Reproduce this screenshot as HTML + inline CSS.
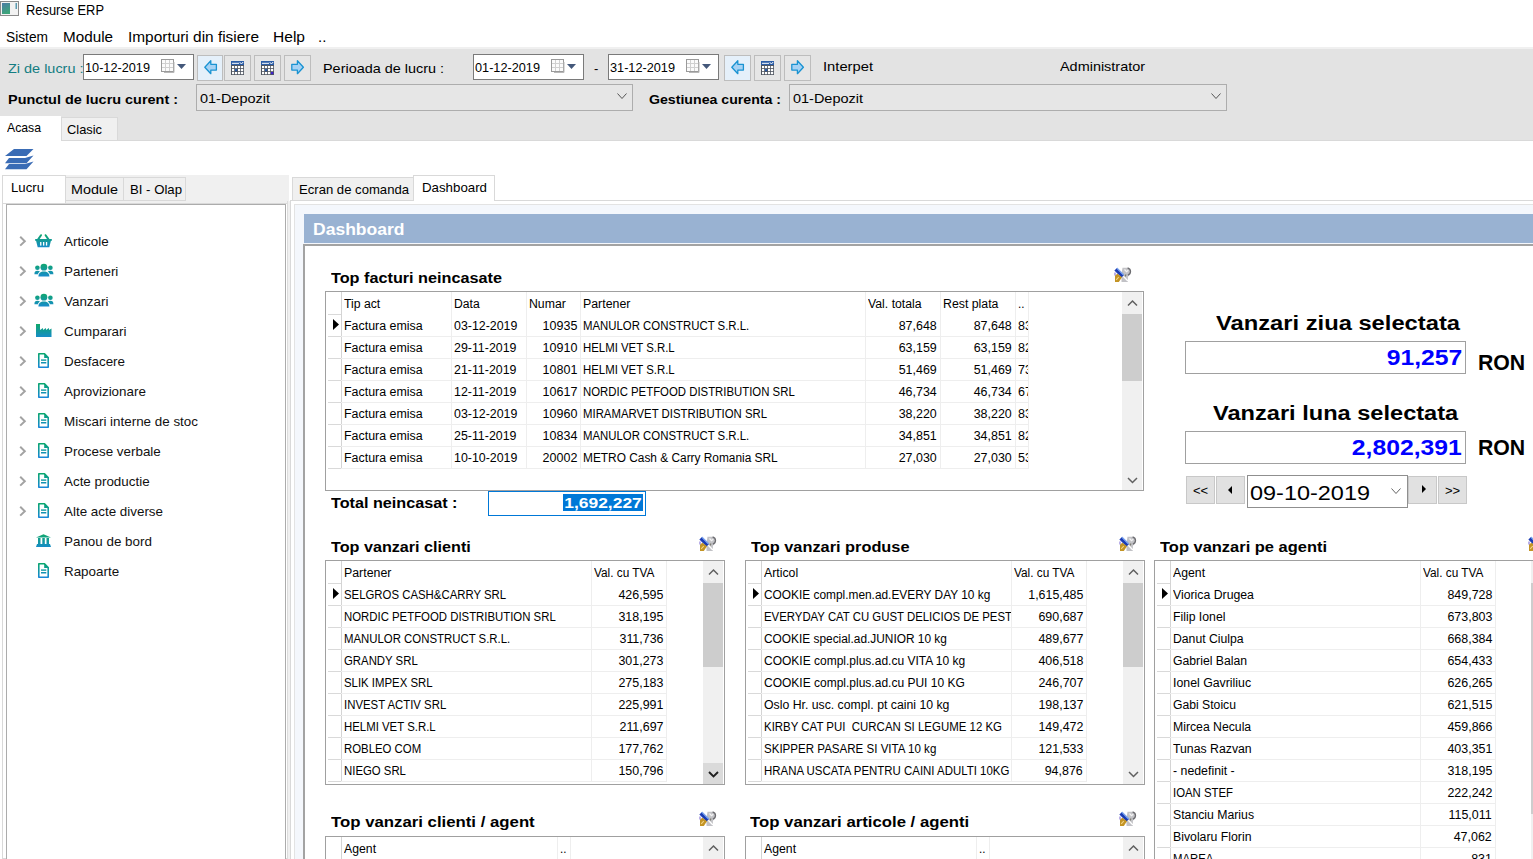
<!DOCTYPE html>
<html><head><meta charset="utf-8"><title>Resurse ERP</title>
<style>
html,body{margin:0;padding:0;width:1533px;height:859px;overflow:hidden;background:#fff;position:relative;font-family:"Liberation Sans",sans-serif;}
.a{position:absolute;}
.t{position:absolute;white-space:pre;line-height:1;}
svg{position:absolute;overflow:visible;}
</style></head><body>
<svg style="left:0;top:0" width="20" height="18"><defs><linearGradient id="ti" x1="0" y1="0" x2="0.4" y2="1"><stop offset="0" stop-color="#4c7ba6"/><stop offset="1" stop-color="#3da57a"/></linearGradient></defs><rect x="0.5" y="1.5" width="18" height="14" fill="#f2f2f2" stroke="#8a8a8a"/><rect x="2" y="3" width="8" height="11" fill="url(#ti)"/><rect x="15.5" y="3" width="1.5" height="6" fill="#5a9ab0"/></svg>
<div class="t" style="top:2.15px;font:14px 'Liberation Sans',sans-serif;color:#000;left:25.8px;transform-origin:0 0;transform:scaleX(0.9197);">Resurse ERP</div>
<div class="t" style="top:28.30px;font:15px 'Liberation Sans',sans-serif;color:#000;left:6px;transform-origin:0 0;transform:scaleX(0.9162);">Sistem</div>
<div class="t" style="top:28.30px;font:15px 'Liberation Sans',sans-serif;color:#000;left:63px;transform-origin:0 0;transform:scaleX(1.0162);">Module</div>
<div class="t" style="top:28.30px;font:15px 'Liberation Sans',sans-serif;color:#000;left:128px;transform-origin:0 0;transform:scaleX(1.0271);">Importuri din fisiere</div>
<div class="t" style="top:28.30px;font:15px 'Liberation Sans',sans-serif;color:#000;left:273px;transform-origin:0 0;transform:scaleX(1.0370);">Help</div>
<div class="t" style="top:28.30px;font:15px 'Liberation Sans',sans-serif;color:#000;left:318px;transform-origin:0 0;">..</div>
<div class="a" style="left:0px;top:47px;width:1533px;height:2px;background:#f0f0f0;"></div>
<div class="a" style="left:0px;top:49px;width:1533px;height:67px;background:#e3e3e3;"></div>
<div class="t" style="top:61.00px;font:13px 'Liberation Sans',sans-serif;color:#137d82;left:7.8px;transform-origin:0 0;transform:scaleX(1.1116);">Zi de lucru :</div>
<div class="a" style="left:83px;top:54px;width:111px;height:26px;background:#fff;box-sizing:border-box;border:1px solid #7a7a7a;"></div>
<div class="t" style="top:60.00px;font:13px 'Liberation Sans',sans-serif;color:#000;left:85.3px;transform-origin:0 0;transform:scaleX(0.9774);">10-12-2019</div>
<svg style="left:161px;top:59px" width="16" height="16"><rect x="0.5" y="0.5" width="12" height="12" fill="#fbfbfb" stroke="#9a9a9a"/><path d="M4.5 1v11M8.5 1v11M1 4.5h11M1 8.5h11" stroke="#d0d0d0"/><path d="M13 3v10.5H3" stroke="#b8b8b8" fill="none"/></svg>
<svg style="left:177px;top:64px" width="10" height="6"><path d="M0 0h9L4.5 5z" fill="#44587a"/></svg>
<div class="a" style="left:197px;top:55px;width:26px;height:26px;background:#e5f0fa;box-sizing:border-box;border:1px solid #bdbdbd;"></div>
<svg style="left:203.5px;top:59.5px" width="14" height="15"><path d="M0.8 7.2L6.8 0.8V4.3h5.6v5.8H6.8v3.6z" fill="#a6d2f4" stroke="#1a93d2" stroke-width="1.3" stroke-linejoin="round"/></svg>
<div class="a" style="left:224px;top:55px;width:27px;height:26px;background:#e6e6e6;box-sizing:border-box;border:1px solid #bdbdbd;"></div>
<svg style="left:231.0px;top:61px" width="13" height="14"><rect x="0" y="0" width="13" height="14" fill="#4f5560"/><rect x="0" y="0" width="13" height="4" fill="#2a5ca6"/><path d="M1 2.3h7" stroke="#fff" stroke-width="1"/><path d="M8.8 1.2l1.6 1.8 1.8-2" stroke="#fff" stroke-width="1" fill="none"/><rect x="1" y="5" width="2.2" height="2.2" fill="#fff"/><rect x="4" y="5" width="2.2" height="2.2" fill="#fff"/><rect x="7" y="5" width="2.2" height="2.2" fill="#fff"/><rect x="10" y="5" width="2.2" height="2.2" fill="#fff"/><rect x="1" y="8" width="2.2" height="2.2" fill="#fff"/><rect x="4" y="8" width="2.2" height="2.2" fill="#2a5aa8"/><rect x="7" y="8" width="2.2" height="2.2" fill="#fff"/><rect x="10" y="8" width="2.2" height="2.2" fill="#fff"/><rect x="1" y="11" width="2.2" height="2.2" fill="#fff"/><rect x="4" y="11" width="2.2" height="2.2" fill="#fff"/><rect x="7" y="11" width="2.2" height="2.2" fill="#fff"/><rect x="10" y="11" width="2.2" height="2.2" fill="#fff"/></svg>
<div class="a" style="left:254px;top:55px;width:27px;height:26px;background:#e6e6e6;box-sizing:border-box;border:1px solid #bdbdbd;"></div>
<svg style="left:261.0px;top:61px" width="13" height="14"><rect x="0" y="0" width="13" height="14" fill="#4f5560"/><rect x="0" y="0" width="13" height="4" fill="#2a5ca6"/><path d="M1 2.3h7" stroke="#fff" stroke-width="1"/><path d="M8.8 1.2l1.6 1.8 1.8-2" stroke="#fff" stroke-width="1" fill="none"/><rect x="1" y="5" width="2.2" height="2.2" fill="#fff"/><rect x="4" y="5" width="2.2" height="2.2" fill="#fff"/><rect x="7" y="5" width="2.2" height="2.2" fill="#fff"/><rect x="10" y="5" width="2.2" height="2.2" fill="#fff"/><rect x="1" y="8" width="2.2" height="2.2" fill="#fff"/><rect x="4" y="8" width="2.2" height="2.2" fill="#2a5aa8"/><rect x="7" y="8" width="2.2" height="2.2" fill="#fff"/><rect x="10" y="8" width="2.2" height="2.2" fill="#fff"/><rect x="1" y="11" width="2.2" height="2.2" fill="#fff"/><rect x="4" y="11" width="2.2" height="2.2" fill="#fff"/><rect x="7" y="11" width="2.2" height="2.2" fill="#fff"/><rect x="10" y="11" width="2.2" height="2.2" fill="#4020d0"/></svg>
<div class="a" style="left:284px;top:55px;width:27px;height:26px;background:#e6e6e6;box-sizing:border-box;border:1px solid #bdbdbd;"></div>
<svg style="left:291.0px;top:59.5px" width="14" height="15"><path d="M12.4 7.2L6.4 0.8V4.3H0.8v5.8h5.6v3.6z" fill="#a6d2f4" stroke="#1a93d2" stroke-width="1.3" stroke-linejoin="round"/></svg>
<div class="t" style="top:61.00px;font:13px 'Liberation Sans',sans-serif;color:#000;left:323px;transform-origin:0 0;transform:scaleX(1.1088);">Perioada de lucru :</div>
<div class="a" style="left:473px;top:54px;width:111px;height:26px;background:#fff;box-sizing:border-box;border:1px solid #7a7a7a;"></div>
<div class="t" style="top:60.00px;font:13px 'Liberation Sans',sans-serif;color:#000;left:475.3px;transform-origin:0 0;transform:scaleX(0.9774);">01-12-2019</div>
<svg style="left:551px;top:59px" width="16" height="16"><rect x="0.5" y="0.5" width="12" height="12" fill="#fbfbfb" stroke="#9a9a9a"/><path d="M4.5 1v11M8.5 1v11M1 4.5h11M1 8.5h11" stroke="#d0d0d0"/><path d="M13 3v10.5H3" stroke="#b8b8b8" fill="none"/></svg>
<svg style="left:567px;top:64px" width="10" height="6"><path d="M0 0h9L4.5 5z" fill="#44587a"/></svg>
<div class="t" style="top:61.00px;font:13px 'Liberation Sans',sans-serif;color:#000;left:594px;transform-origin:0 0;">-</div>
<div class="a" style="left:608px;top:54px;width:111px;height:26px;background:#fff;box-sizing:border-box;border:1px solid #7a7a7a;"></div>
<div class="t" style="top:60.00px;font:13px 'Liberation Sans',sans-serif;color:#000;left:610.3px;transform-origin:0 0;transform:scaleX(0.9774);">31-12-2019</div>
<svg style="left:686px;top:59px" width="16" height="16"><rect x="0.5" y="0.5" width="12" height="12" fill="#fbfbfb" stroke="#9a9a9a"/><path d="M4.5 1v11M8.5 1v11M1 4.5h11M1 8.5h11" stroke="#d0d0d0"/><path d="M13 3v10.5H3" stroke="#b8b8b8" fill="none"/></svg>
<svg style="left:702px;top:64px" width="10" height="6"><path d="M0 0h9L4.5 5z" fill="#44587a"/></svg>
<div class="a" style="left:724px;top:55px;width:27px;height:26px;background:#e5f0fa;box-sizing:border-box;border:1px solid #bdbdbd;"></div>
<svg style="left:731.0px;top:59.5px" width="14" height="15"><path d="M0.8 7.2L6.8 0.8V4.3h5.6v5.8H6.8v3.6z" fill="#a6d2f4" stroke="#1a93d2" stroke-width="1.3" stroke-linejoin="round"/></svg>
<div class="a" style="left:754px;top:55px;width:27px;height:26px;background:#e6e6e6;box-sizing:border-box;border:1px solid #bdbdbd;"></div>
<svg style="left:761.0px;top:61px" width="13" height="14"><rect x="0" y="0" width="13" height="14" fill="#4f5560"/><rect x="0" y="0" width="13" height="4" fill="#2a5ca6"/><path d="M1 2.3h7" stroke="#fff" stroke-width="1"/><path d="M8.8 1.2l1.6 1.8 1.8-2" stroke="#fff" stroke-width="1" fill="none"/><rect x="1" y="5" width="2.2" height="2.2" fill="#fff"/><rect x="4" y="5" width="2.2" height="2.2" fill="#fff"/><rect x="7" y="5" width="2.2" height="2.2" fill="#fff"/><rect x="10" y="5" width="2.2" height="2.2" fill="#fff"/><rect x="1" y="8" width="2.2" height="2.2" fill="#fff"/><rect x="4" y="8" width="2.2" height="2.2" fill="#2a5aa8"/><rect x="7" y="8" width="2.2" height="2.2" fill="#fff"/><rect x="10" y="8" width="2.2" height="2.2" fill="#fff"/><rect x="1" y="11" width="2.2" height="2.2" fill="#fff"/><rect x="4" y="11" width="2.2" height="2.2" fill="#fff"/><rect x="7" y="11" width="2.2" height="2.2" fill="#fff"/><rect x="10" y="11" width="2.2" height="2.2" fill="#fff"/></svg>
<div class="a" style="left:784px;top:55px;width:27px;height:26px;background:#e6e6e6;box-sizing:border-box;border:1px solid #bdbdbd;"></div>
<svg style="left:791.0px;top:59.5px" width="14" height="15"><path d="M12.4 7.2L6.4 0.8V4.3H0.8v5.8h5.6v3.6z" fill="#a6d2f4" stroke="#1a93d2" stroke-width="1.3" stroke-linejoin="round"/></svg>
<div class="t" style="top:59.00px;font:13px 'Liberation Sans',sans-serif;color:#000;left:823px;transform-origin:0 0;transform:scaleX(1.1339);">Interpet</div>
<div class="t" style="top:59.00px;font:13px 'Liberation Sans',sans-serif;color:#000;left:1059.5px;transform-origin:0 0;transform:scaleX(1.1100);">Administrator</div>
<div class="t" style="top:91.50px;font:bold 13px 'Liberation Sans',sans-serif;color:#000;left:8px;transform-origin:0 0;transform:scaleX(1.1102);">Punctul de lucru curent :</div>
<div class="a" style="left:196px;top:84px;width:437px;height:27px;background:#e6e6e6;box-sizing:border-box;border:1px solid #adadad;"></div>
<div class="t" style="top:91.00px;font:13px 'Liberation Sans',sans-serif;color:#000;left:200px;transform-origin:0 0;transform:scaleX(1.1133);">01-Depozit</div>
<svg style="left:617px;top:93px" width="11" height="7"><path d="M0.5 0.5L5 5.5L9.5 0.5" fill="none" stroke="#555" stroke-width="1"/></svg>
<div class="t" style="top:91.50px;font:bold 13px 'Liberation Sans',sans-serif;color:#000;left:649px;transform-origin:0 0;transform:scaleX(1.0875);">Gestiunea curenta :</div>
<div class="a" style="left:789px;top:84px;width:438px;height:27px;background:#e6e6e6;box-sizing:border-box;border:1px solid #adadad;"></div>
<div class="t" style="top:91.00px;font:13px 'Liberation Sans',sans-serif;color:#000;left:793px;transform-origin:0 0;transform:scaleX(1.1133);">01-Depozit</div>
<svg style="left:1211px;top:93px" width="11" height="7"><path d="M0.5 0.5L5 5.5L9.5 0.5" fill="none" stroke="#555" stroke-width="1"/></svg>
<div class="a" style="left:0px;top:116px;width:1533px;height:24px;background:#e3e3e3;"></div>
<div class="a" style="left:61px;top:140px;width:1472px;height:1px;background:#d9d9d9;"></div>
<div class="a" style="left:0px;top:116px;width:61px;height:25px;background:#fff;"></div>
<div class="a" style="left:61px;top:117px;width:57px;height:23px;background:#f0f0f0;box-sizing:border-box;border:1px solid #d9d9d9;border-bottom:none;"></div>
<div class="t" style="top:120.00px;font:13px 'Liberation Sans',sans-serif;color:#000;left:6.5px;transform-origin:0 0;transform:scaleX(0.9408);">Acasa</div>
<div class="t" style="top:122.00px;font:13px 'Liberation Sans',sans-serif;color:#000;left:66.5px;transform-origin:0 0;transform:scaleX(0.9885);">Clasic</div>
<svg style="left:0;top:145px" width="40" height="30"><g fill="#3a6cb5"><path d="M14 4L33.5 4L26.5 11L5 11z"/><path d="M5 18.3L9 13L25 13L33.5 10.5L26.5 18.3z"/><path d="M5 24.3L9 19L25 19L33.5 16.5L26.5 24.3z"/></g></svg>
<div class="a" style="left:2px;top:175px;width:287px;height:28px;background:#f0f0f0;"></div>
<div class="a" style="left:2px;top:175px;width:64px;height:29px;background:#fff;box-sizing:border-box;border:1px solid #d9d9d9;border-bottom:none;"></div>
<div class="a" style="left:65px;top:177px;width:59px;height:24px;background:#f0f0f0;box-sizing:border-box;border:1px solid #d9d9d9;"></div>
<div class="a" style="left:123px;top:177px;width:63px;height:24px;background:#f0f0f0;box-sizing:border-box;border:1px solid #d9d9d9;"></div>
<div class="t" style="top:180.00px;font:13px 'Liberation Sans',sans-serif;color:#000;left:10.5px;transform-origin:0 0;transform:scaleX(1.0144);">Lucru</div>
<div class="t" style="top:181.50px;font:13px 'Liberation Sans',sans-serif;color:#000;left:70.5px;transform-origin:0 0;transform:scaleX(1.1022);">Module</div>
<div class="t" style="top:181.50px;font:13px 'Liberation Sans',sans-serif;color:#000;left:130px;transform-origin:0 0;transform:scaleX(1.0137);">BI - Olap</div>
<div class="a" style="left:2px;top:203px;width:286px;height:656px;background:#fff;box-sizing:border-box;border:1px solid #d9d9d9;"></div>
<div class="a" style="left:6px;top:204px;width:280px;height:666px;background:#fff;box-sizing:border-box;border:1px solid #acacac;"></div>
<svg style="left:0;top:0" width="1" height="1"><defs><linearGradient id="g" gradientUnits="userSpaceOnUse" x1="0" y1="0" x2="0" y2="15"><stop offset="0" stop-color="#0fa86a"/><stop offset="1" stop-color="#1888d6"/></linearGradient><linearGradient id="gd" gradientUnits="userSpaceOnUse" x1="0" y1="1" x2="0" y2="16"><stop offset="0" stop-color="#0aa86a"/><stop offset="1" stop-color="#1886dc"/></linearGradient></defs></svg>
<svg style="left:19px;top:236.3px" width="8" height="11"><path d="M1.2 0.8L5.8 5.2L1.2 9.6" fill="none" stroke="#a3a3a3" stroke-width="2"/></svg>
<svg style="left:34px;top:233.8px" width="19" height="14"><path d="M7 1.2L4 5.6M11.6 1.2L14.6 5.6" stroke="url(#g)" stroke-width="2" stroke-linecap="round" fill="none"/><rect x="1" y="5" width="17" height="1.9" rx="0.8" fill="url(#g)"/><path d="M2 6.5H17L15.3 13.3H3.7Z" fill="url(#g)"/><g fill="#fff"><rect x="6.1" y="8" width="1.3" height="3.6"/><rect x="9" y="8" width="1.3" height="3.6"/><rect x="11.9" y="8" width="1.3" height="3.6"/></g></svg>
<div class="t" style="top:233.80px;font:13px 'Liberation Sans',sans-serif;color:#111;left:63.5px;transform-origin:0 0;transform:scaleX(1.0300);">Articole</div>
<svg style="left:19px;top:266.3px" width="8" height="11"><path d="M1.2 0.8L5.8 5.2L1.2 9.6" fill="none" stroke="#a3a3a3" stroke-width="2"/></svg>
<svg style="left:33.5px;top:263.2px" width="20" height="15"><circle cx="9.9" cy="4.2" r="3.4" fill="url(#g)"/><circle cx="3.4" cy="4.8" r="2.3" fill="url(#g)"/><circle cx="16.4" cy="4.8" r="2.3" fill="url(#g)"/><path d="M4.4 13.6C4.4 9.8 6.6 8.4 9.9 8.4C13.2 8.4 15.4 9.8 15.4 13.6Z" fill="url(#g)"/><path d="M0.4 11.2C0.4 8.8 1.4 7.8 3.4 7.8C4.6 7.8 5.4 8.1 6 8.6C5 9.3 4.2 10.2 4 11.2Z" fill="url(#g)"/><path d="M19.4 11.2C19.4 8.8 18.4 7.8 16.4 7.8C15.2 7.8 14.4 8.1 13.8 8.6C14.8 9.3 15.6 10.2 15.8 11.2Z" fill="url(#g)"/></svg>
<div class="t" style="top:263.80px;font:13px 'Liberation Sans',sans-serif;color:#111;left:63.5px;transform-origin:0 0;transform:scaleX(1.0300);">Parteneri</div>
<svg style="left:19px;top:296.3px" width="8" height="11"><path d="M1.2 0.8L5.8 5.2L1.2 9.6" fill="none" stroke="#a3a3a3" stroke-width="2"/></svg>
<svg style="left:33.5px;top:293.2px" width="20" height="15"><circle cx="9.9" cy="4.2" r="3.4" fill="url(#g)"/><circle cx="3.4" cy="4.8" r="2.3" fill="url(#g)"/><circle cx="16.4" cy="4.8" r="2.3" fill="url(#g)"/><path d="M4.4 13.6C4.4 9.8 6.6 8.4 9.9 8.4C13.2 8.4 15.4 9.8 15.4 13.6Z" fill="url(#g)"/><path d="M0.4 11.2C0.4 8.8 1.4 7.8 3.4 7.8C4.6 7.8 5.4 8.1 6 8.6C5 9.3 4.2 10.2 4 11.2Z" fill="url(#g)"/><path d="M19.4 11.2C19.4 8.8 18.4 7.8 16.4 7.8C15.2 7.8 14.4 8.1 13.8 8.6C14.8 9.3 15.6 10.2 15.8 11.2Z" fill="url(#g)"/></svg>
<div class="t" style="top:293.80px;font:13px 'Liberation Sans',sans-serif;color:#111;left:63.5px;transform-origin:0 0;transform:scaleX(1.0300);">Vanzari</div>
<svg style="left:19px;top:326.3px" width="8" height="11"><path d="M1.2 0.8L5.8 5.2L1.2 9.6" fill="none" stroke="#a3a3a3" stroke-width="2"/></svg>
<svg style="left:36px;top:323.8px" width="16" height="14"><path d="M0 0h4v6l3-2v2l3-2v2l3-2v2l2.5-1.5V13H0z" fill="url(#g)"/></svg>
<div class="t" style="top:323.80px;font:13px 'Liberation Sans',sans-serif;color:#111;left:63.5px;transform-origin:0 0;transform:scaleX(1.0300);">Cumparari</div>
<svg style="left:19px;top:356.3px" width="8" height="11"><path d="M1.2 0.8L5.8 5.2L1.2 9.6" fill="none" stroke="#a3a3a3" stroke-width="2"/></svg>
<svg style="left:37px;top:351.8px" width="13" height="17"><path d="M1.8 1.8H7.5L11.2 5.5V15.2H1.8Z" fill="#fff" stroke="url(#gd)" stroke-width="1.6" stroke-linejoin="round"/><path d="M7.2 1V5.9H12Z" fill="url(#gd)"/><rect x="4" y="7.4" width="5.3" height="1.4" fill="url(#gd)"/><rect x="4" y="10" width="5.3" height="1.5" fill="url(#gd)"/></svg>
<div class="t" style="top:353.80px;font:13px 'Liberation Sans',sans-serif;color:#111;left:63.5px;transform-origin:0 0;transform:scaleX(1.0300);">Desfacere</div>
<svg style="left:19px;top:386.3px" width="8" height="11"><path d="M1.2 0.8L5.8 5.2L1.2 9.6" fill="none" stroke="#a3a3a3" stroke-width="2"/></svg>
<svg style="left:37px;top:381.8px" width="13" height="17"><path d="M1.8 1.8H7.5L11.2 5.5V15.2H1.8Z" fill="#fff" stroke="url(#gd)" stroke-width="1.6" stroke-linejoin="round"/><path d="M7.2 1V5.9H12Z" fill="url(#gd)"/><rect x="4" y="7.4" width="5.3" height="1.4" fill="url(#gd)"/><rect x="4" y="10" width="5.3" height="1.5" fill="url(#gd)"/></svg>
<div class="t" style="top:383.80px;font:13px 'Liberation Sans',sans-serif;color:#111;left:63.5px;transform-origin:0 0;transform:scaleX(1.0300);">Aprovizionare</div>
<svg style="left:19px;top:416.3px" width="8" height="11"><path d="M1.2 0.8L5.8 5.2L1.2 9.6" fill="none" stroke="#a3a3a3" stroke-width="2"/></svg>
<svg style="left:37px;top:411.8px" width="13" height="17"><path d="M1.8 1.8H7.5L11.2 5.5V15.2H1.8Z" fill="#fff" stroke="url(#gd)" stroke-width="1.6" stroke-linejoin="round"/><path d="M7.2 1V5.9H12Z" fill="url(#gd)"/><rect x="4" y="7.4" width="5.3" height="1.4" fill="url(#gd)"/><rect x="4" y="10" width="5.3" height="1.5" fill="url(#gd)"/></svg>
<div class="t" style="top:413.80px;font:13px 'Liberation Sans',sans-serif;color:#111;left:63.5px;transform-origin:0 0;transform:scaleX(1.0300);">Miscari interne de stoc</div>
<svg style="left:19px;top:446.3px" width="8" height="11"><path d="M1.2 0.8L5.8 5.2L1.2 9.6" fill="none" stroke="#a3a3a3" stroke-width="2"/></svg>
<svg style="left:37px;top:441.8px" width="13" height="17"><path d="M1.8 1.8H7.5L11.2 5.5V15.2H1.8Z" fill="#fff" stroke="url(#gd)" stroke-width="1.6" stroke-linejoin="round"/><path d="M7.2 1V5.9H12Z" fill="url(#gd)"/><rect x="4" y="7.4" width="5.3" height="1.4" fill="url(#gd)"/><rect x="4" y="10" width="5.3" height="1.5" fill="url(#gd)"/></svg>
<div class="t" style="top:443.80px;font:13px 'Liberation Sans',sans-serif;color:#111;left:63.5px;transform-origin:0 0;transform:scaleX(1.0300);">Procese verbale</div>
<svg style="left:19px;top:476.3px" width="8" height="11"><path d="M1.2 0.8L5.8 5.2L1.2 9.6" fill="none" stroke="#a3a3a3" stroke-width="2"/></svg>
<svg style="left:37px;top:471.8px" width="13" height="17"><path d="M1.8 1.8H7.5L11.2 5.5V15.2H1.8Z" fill="#fff" stroke="url(#gd)" stroke-width="1.6" stroke-linejoin="round"/><path d="M7.2 1V5.9H12Z" fill="url(#gd)"/><rect x="4" y="7.4" width="5.3" height="1.4" fill="url(#gd)"/><rect x="4" y="10" width="5.3" height="1.5" fill="url(#gd)"/></svg>
<div class="t" style="top:473.80px;font:13px 'Liberation Sans',sans-serif;color:#111;left:63.5px;transform-origin:0 0;transform:scaleX(1.0300);">Acte productie</div>
<svg style="left:19px;top:506.29999999999995px" width="8" height="11"><path d="M1.2 0.8L5.8 5.2L1.2 9.6" fill="none" stroke="#a3a3a3" stroke-width="2"/></svg>
<svg style="left:37px;top:501.79999999999995px" width="13" height="17"><path d="M1.8 1.8H7.5L11.2 5.5V15.2H1.8Z" fill="#fff" stroke="url(#gd)" stroke-width="1.6" stroke-linejoin="round"/><path d="M7.2 1V5.9H12Z" fill="url(#gd)"/><rect x="4" y="7.4" width="5.3" height="1.4" fill="url(#gd)"/><rect x="4" y="10" width="5.3" height="1.5" fill="url(#gd)"/></svg>
<div class="t" style="top:503.80px;font:13px 'Liberation Sans',sans-serif;color:#111;left:63.5px;transform-origin:0 0;transform:scaleX(1.0300);">Alte acte diverse</div>
<svg style="left:36px;top:533.8px" width="16" height="14"><path d="M7.5 0.3L15 3.6H0z" fill="url(#g)"/><rect x="2" y="4" width="2.5" height="6" fill="url(#g)"/><rect x="6.3" y="4" width="2.5" height="6" fill="url(#g)"/><rect x="10.5" y="4" width="2.5" height="6" fill="url(#g)"/><path d="M1 10h13l1 3H0z" fill="url(#g)"/></svg>
<div class="t" style="top:533.80px;font:13px 'Liberation Sans',sans-serif;color:#111;left:63.5px;transform-origin:0 0;transform:scaleX(1.0300);">Panou de bord</div>
<svg style="left:37px;top:561.8px" width="13" height="17"><path d="M1.8 1.8H7.5L11.2 5.5V15.2H1.8Z" fill="#fff" stroke="url(#gd)" stroke-width="1.6" stroke-linejoin="round"/><path d="M7.2 1V5.9H12Z" fill="url(#gd)"/><rect x="4" y="7.4" width="5.3" height="1.4" fill="url(#gd)"/><rect x="4" y="10" width="5.3" height="1.5" fill="url(#gd)"/></svg>
<div class="t" style="top:563.80px;font:13px 'Liberation Sans',sans-serif;color:#111;left:63.5px;transform-origin:0 0;transform:scaleX(1.0300);">Rapoarte</div>
<div class="a" style="left:290px;top:175px;width:1243px;height:26px;background:#fff;"></div>
<div class="a" style="left:292px;top:177px;width:122px;height:24px;background:#f0f0f0;box-sizing:border-box;border:1px solid #d9d9d9;"></div>
<div class="a" style="left:290px;top:200px;width:1270px;height:700px;background:#fff;box-sizing:border-box;border:1px solid #d9d9d9;"></div>
<div class="a" style="left:413px;top:175px;width:82px;height:26px;background:#fff;box-sizing:border-box;border:1px solid #d9d9d9;border-bottom:none;"></div>
<div class="a" style="left:294px;top:204px;width:1266px;height:696px;background:#f4f7fc;box-sizing:border-box;border:1px solid #e3e3e3;"></div>
<div class="a" style="left:287px;top:201px;width:4px;height:658px;background:#f0f0f0;box-sizing:border-box;border-left:1px solid #dcdcdc;border-right:1px solid #d9d9d9;"></div>
<div class="t" style="top:181.50px;font:13px 'Liberation Sans',sans-serif;color:#000;left:298.5px;transform-origin:0 0;transform:scaleX(1.0080);">Ecran de comanda</div>
<div class="t" style="top:179.50px;font:13px 'Liberation Sans',sans-serif;color:#000;left:421.5px;transform-origin:0 0;transform:scaleX(1.0219);">Dashboard</div>
<div class="a" style="left:304px;top:214px;width:1229px;height:29px;background:#99b2d2;"></div>
<div class="t" style="top:219.61px;font:bold 17px 'Liberation Sans',sans-serif;color:#fff;left:313px;transform-origin:0 0;transform:scaleX(1.0304);">Dashboard</div>
<div class="a" style="left:303px;top:244px;width:1257px;height:656px;background:#fff;box-sizing:border-box;border:2px solid #a3a3a3;"></div>
<div class="t" style="top:269.85px;font:bold 14px 'Liberation Sans',sans-serif;color:#000;left:331.3px;transform-origin:0 0;transform:scaleX(1.1588);">Top facturi neincasate</div>
<svg style="left:1114.5px;top:266.5px" width="17" height="16"><path d="M7.5 0.8h5l3 2.8v3.6l-2.6 2.6v5.2H6.5V7z" fill="#c2c2c6"/><path d="M12.6 0.9c1.8 0.6 2.9 2 2.9 3.6c0 1.6-1 2.9-2.6 3.6" fill="none" stroke="#6c6c70" stroke-width="1.3"/><path d="M9.5 2.5l2 2.2 1.8-1.4" fill="none" stroke="#f4f4f4" stroke-width="1.2"/><path d="M11 7.5l-1 2" stroke="#7a7a70" stroke-width="1.2"/><path d="M8.3 9.2l4.6 4.8" stroke="#ffffff" stroke-width="1.3"/><path d="M0.8 2.2l7 7" stroke="#1c3cb4" stroke-width="4"/><path d="M1.8 1.2l6.8 6.8" stroke="#86b2f6" stroke-width="1.1"/><path d="M0 8.6l2.4-1.8 4.6 3.4-3.2 4.8H0z" fill="#c39424"/><path d="M1.2 12.8l2.6-2.8" stroke="#f6d68a" stroke-width="1.1"/><path d="M0 5.5v3" stroke="#8a7ad8" stroke-width="1.2"/></svg>
<div class="a" style="left:325px;top:291px;width:819px;height:200px;overflow:hidden;box-sizing:border-box;border:1px solid #a0a0a0;background:#fff"></div>
<div class="a" style="left:341px;top:292px;width:1px;height:176px;background:#d4d4d4;"></div>
<div class="a" style="left:451px;top:292px;width:1px;height:176px;background:#eeeeee;"></div>
<div class="a" style="left:526px;top:292px;width:1px;height:176px;background:#eeeeee;"></div>
<div class="a" style="left:580px;top:292px;width:1px;height:176px;background:#eeeeee;"></div>
<div class="a" style="left:865px;top:292px;width:1px;height:176px;background:#eeeeee;"></div>
<div class="a" style="left:940px;top:292px;width:1px;height:176px;background:#eeeeee;"></div>
<div class="a" style="left:1015px;top:292px;width:1px;height:176px;background:#eeeeee;"></div>
<div class="a" style="left:1028px;top:292px;width:1px;height:176px;background:#eeeeee;"></div>
<div class="a" style="left:328px;top:314px;width:13px;height:1px;background:#d9d9d9;"></div>
<div class="a" style="left:328px;top:336px;width:13px;height:1px;background:#d9d9d9;"></div>
<div class="a" style="left:341px;top:336px;width:688px;height:1px;background:#eeeeee;"></div>
<div class="a" style="left:328px;top:358px;width:13px;height:1px;background:#d9d9d9;"></div>
<div class="a" style="left:341px;top:358px;width:688px;height:1px;background:#eeeeee;"></div>
<div class="a" style="left:328px;top:380px;width:13px;height:1px;background:#d9d9d9;"></div>
<div class="a" style="left:341px;top:380px;width:688px;height:1px;background:#eeeeee;"></div>
<div class="a" style="left:328px;top:402px;width:13px;height:1px;background:#d9d9d9;"></div>
<div class="a" style="left:341px;top:402px;width:688px;height:1px;background:#eeeeee;"></div>
<div class="a" style="left:328px;top:424px;width:13px;height:1px;background:#d9d9d9;"></div>
<div class="a" style="left:341px;top:424px;width:688px;height:1px;background:#eeeeee;"></div>
<div class="a" style="left:328px;top:446px;width:13px;height:1px;background:#d9d9d9;"></div>
<div class="a" style="left:341px;top:446px;width:688px;height:1px;background:#eeeeee;"></div>
<div class="a" style="left:328px;top:468px;width:13px;height:1px;background:#d9d9d9;"></div>
<div class="a" style="left:341px;top:468px;width:688px;height:1px;background:#eeeeee;"></div>
<div class="a" style="left:342px;top:0;width:109px;height:900px;overflow:hidden"><div class="t" style="top:297.14px;font:12px 'Liberation Sans',sans-serif;color:#000;left:2.00px;transform-origin:0 0;transform:scaleX(1.0192);">Tip act</div></div>
<div class="a" style="left:452px;top:0;width:74px;height:900px;overflow:hidden"><div class="t" style="top:297.14px;font:12px 'Liberation Sans',sans-serif;color:#000;left:2.00px;transform-origin:0 0;transform:scaleX(1.0128);">Data</div></div>
<div class="a" style="left:527px;top:0;width:53px;height:900px;overflow:hidden"><div class="t" style="top:297.14px;font:12px 'Liberation Sans',sans-serif;color:#000;left:2.00px;transform-origin:0 0;transform:scaleX(1.0229);">Numar</div></div>
<div class="a" style="left:581px;top:0;width:284px;height:900px;overflow:hidden"><div class="t" style="top:297.14px;font:12px 'Liberation Sans',sans-serif;color:#000;left:2.00px;transform-origin:0 0;transform:scaleX(1.0296);">Partener</div></div>
<div class="a" style="left:866px;top:0;width:74px;height:900px;overflow:hidden"><div class="t" style="top:297.14px;font:12px 'Liberation Sans',sans-serif;color:#000;left:2.00px;transform-origin:0 0;transform:scaleX(1.0220);">Val. totala</div></div>
<div class="a" style="left:941px;top:0;width:74px;height:900px;overflow:hidden"><div class="t" style="top:297.14px;font:12px 'Liberation Sans',sans-serif;color:#000;left:2.00px;transform-origin:0 0;transform:scaleX(1.0260);">Rest plata</div></div>
<div class="a" style="left:1016px;top:0;width:12px;height:900px;overflow:hidden"><div class="t" style="top:297.14px;font:12px 'Liberation Sans',sans-serif;color:#000;left:2.00px;transform-origin:0 0;transform:scaleX(0.9670);">..</div></div>
<svg style="left:333px;top:318.5px" width="7" height="12"><path d="M0 0L6 5.5L0 11z" fill="#000"/></svg>
<div class="a" style="left:342px;top:0;width:109px;height:900px;overflow:hidden"><div class="t" style="top:319.14px;font:12px 'Liberation Sans',sans-serif;color:#000;left:2.00px;transform-origin:0 0;transform:scaleX(1.0338);">Factura emisa</div></div>
<div class="a" style="left:452px;top:0;width:74px;height:900px;overflow:hidden"><div class="t" style="top:319.14px;font:12px 'Liberation Sans',sans-serif;color:#000;left:2.00px;transform-origin:0 0;transform:scaleX(1.0322);">03-12-2019</div></div>
<div class="a" style="left:527px;top:0;width:53px;height:900px;overflow:hidden"><div class="t" style="top:319.14px;font:12px 'Liberation Sans',sans-serif;color:#000;left:16.62px;transform-origin:100% 0;transform:scaleX(1.0420);">10935</div></div>
<div class="a" style="left:581px;top:0;width:284px;height:900px;overflow:hidden"><div class="t" style="top:319.14px;font:12px 'Liberation Sans',sans-serif;color:#000;left:2.00px;transform-origin:0 0;transform:scaleX(0.9489);">MANULOR CONSTRUCT S.R.L.</div></div>
<div class="a" style="left:866px;top:0;width:74px;height:900px;overflow:hidden"><div class="t" style="top:319.14px;font:12px 'Liberation Sans',sans-serif;color:#000;left:34.30px;transform-origin:100% 0;transform:scaleX(1.0352);">87,648</div></div>
<div class="a" style="left:941px;top:0;width:74px;height:900px;overflow:hidden"><div class="t" style="top:319.14px;font:12px 'Liberation Sans',sans-serif;color:#000;left:34.30px;transform-origin:100% 0;transform:scaleX(1.0352);">87,648</div></div>
<div class="a" style="left:1016px;top:0;width:12px;height:900px;overflow:hidden"><div class="t" style="top:319.14px;font:12px 'Liberation Sans',sans-serif;color:#000;left:2.00px;transform-origin:0 0;transform:scaleX(1.0420);">83</div></div>
<div class="a" style="left:342px;top:0;width:109px;height:900px;overflow:hidden"><div class="t" style="top:341.14px;font:12px 'Liberation Sans',sans-serif;color:#000;left:2.00px;transform-origin:0 0;transform:scaleX(1.0338);">Factura emisa</div></div>
<div class="a" style="left:452px;top:0;width:74px;height:900px;overflow:hidden"><div class="t" style="top:341.14px;font:12px 'Liberation Sans',sans-serif;color:#000;left:2.00px;transform-origin:0 0;transform:scaleX(1.0322);">29-11-2019</div></div>
<div class="a" style="left:527px;top:0;width:53px;height:900px;overflow:hidden"><div class="t" style="top:341.14px;font:12px 'Liberation Sans',sans-serif;color:#000;left:16.62px;transform-origin:100% 0;transform:scaleX(1.0420);">10910</div></div>
<div class="a" style="left:581px;top:0;width:284px;height:900px;overflow:hidden"><div class="t" style="top:341.14px;font:12px 'Liberation Sans',sans-serif;color:#000;left:2.00px;transform-origin:0 0;transform:scaleX(0.9498);">HELMI VET S.R.L</div></div>
<div class="a" style="left:866px;top:0;width:74px;height:900px;overflow:hidden"><div class="t" style="top:341.14px;font:12px 'Liberation Sans',sans-serif;color:#000;left:34.30px;transform-origin:100% 0;transform:scaleX(1.0352);">63,159</div></div>
<div class="a" style="left:941px;top:0;width:74px;height:900px;overflow:hidden"><div class="t" style="top:341.14px;font:12px 'Liberation Sans',sans-serif;color:#000;left:34.30px;transform-origin:100% 0;transform:scaleX(1.0352);">63,159</div></div>
<div class="a" style="left:1016px;top:0;width:12px;height:900px;overflow:hidden"><div class="t" style="top:341.14px;font:12px 'Liberation Sans',sans-serif;color:#000;left:2.00px;transform-origin:0 0;transform:scaleX(1.0420);">82</div></div>
<div class="a" style="left:342px;top:0;width:109px;height:900px;overflow:hidden"><div class="t" style="top:363.14px;font:12px 'Liberation Sans',sans-serif;color:#000;left:2.00px;transform-origin:0 0;transform:scaleX(1.0338);">Factura emisa</div></div>
<div class="a" style="left:452px;top:0;width:74px;height:900px;overflow:hidden"><div class="t" style="top:363.14px;font:12px 'Liberation Sans',sans-serif;color:#000;left:2.00px;transform-origin:0 0;transform:scaleX(1.0322);">21-11-2019</div></div>
<div class="a" style="left:527px;top:0;width:53px;height:900px;overflow:hidden"><div class="t" style="top:363.14px;font:12px 'Liberation Sans',sans-serif;color:#000;left:16.62px;transform-origin:100% 0;transform:scaleX(1.0420);">10801</div></div>
<div class="a" style="left:581px;top:0;width:284px;height:900px;overflow:hidden"><div class="t" style="top:363.14px;font:12px 'Liberation Sans',sans-serif;color:#000;left:2.00px;transform-origin:0 0;transform:scaleX(0.9498);">HELMI VET S.R.L</div></div>
<div class="a" style="left:866px;top:0;width:74px;height:900px;overflow:hidden"><div class="t" style="top:363.14px;font:12px 'Liberation Sans',sans-serif;color:#000;left:34.30px;transform-origin:100% 0;transform:scaleX(1.0352);">51,469</div></div>
<div class="a" style="left:941px;top:0;width:74px;height:900px;overflow:hidden"><div class="t" style="top:363.14px;font:12px 'Liberation Sans',sans-serif;color:#000;left:34.30px;transform-origin:100% 0;transform:scaleX(1.0352);">51,469</div></div>
<div class="a" style="left:1016px;top:0;width:12px;height:900px;overflow:hidden"><div class="t" style="top:363.14px;font:12px 'Liberation Sans',sans-serif;color:#000;left:2.00px;transform-origin:0 0;transform:scaleX(1.0420);">73</div></div>
<div class="a" style="left:342px;top:0;width:109px;height:900px;overflow:hidden"><div class="t" style="top:385.14px;font:12px 'Liberation Sans',sans-serif;color:#000;left:2.00px;transform-origin:0 0;transform:scaleX(1.0338);">Factura emisa</div></div>
<div class="a" style="left:452px;top:0;width:74px;height:900px;overflow:hidden"><div class="t" style="top:385.14px;font:12px 'Liberation Sans',sans-serif;color:#000;left:2.00px;transform-origin:0 0;transform:scaleX(1.0322);">12-11-2019</div></div>
<div class="a" style="left:527px;top:0;width:53px;height:900px;overflow:hidden"><div class="t" style="top:385.14px;font:12px 'Liberation Sans',sans-serif;color:#000;left:16.62px;transform-origin:100% 0;transform:scaleX(1.0420);">10617</div></div>
<div class="a" style="left:581px;top:0;width:284px;height:900px;overflow:hidden"><div class="t" style="top:385.14px;font:12px 'Liberation Sans',sans-serif;color:#000;left:2.00px;transform-origin:0 0;transform:scaleX(0.9479);">NORDIC PETFOOD DISTRIBUTION SRL</div></div>
<div class="a" style="left:866px;top:0;width:74px;height:900px;overflow:hidden"><div class="t" style="top:385.14px;font:12px 'Liberation Sans',sans-serif;color:#000;left:34.30px;transform-origin:100% 0;transform:scaleX(1.0352);">46,734</div></div>
<div class="a" style="left:941px;top:0;width:74px;height:900px;overflow:hidden"><div class="t" style="top:385.14px;font:12px 'Liberation Sans',sans-serif;color:#000;left:34.30px;transform-origin:100% 0;transform:scaleX(1.0352);">46,734</div></div>
<div class="a" style="left:1016px;top:0;width:12px;height:900px;overflow:hidden"><div class="t" style="top:385.14px;font:12px 'Liberation Sans',sans-serif;color:#000;left:2.00px;transform-origin:0 0;transform:scaleX(1.0420);">67</div></div>
<div class="a" style="left:342px;top:0;width:109px;height:900px;overflow:hidden"><div class="t" style="top:407.14px;font:12px 'Liberation Sans',sans-serif;color:#000;left:2.00px;transform-origin:0 0;transform:scaleX(1.0338);">Factura emisa</div></div>
<div class="a" style="left:452px;top:0;width:74px;height:900px;overflow:hidden"><div class="t" style="top:407.14px;font:12px 'Liberation Sans',sans-serif;color:#000;left:2.00px;transform-origin:0 0;transform:scaleX(1.0322);">03-12-2019</div></div>
<div class="a" style="left:527px;top:0;width:53px;height:900px;overflow:hidden"><div class="t" style="top:407.14px;font:12px 'Liberation Sans',sans-serif;color:#000;left:16.62px;transform-origin:100% 0;transform:scaleX(1.0420);">10960</div></div>
<div class="a" style="left:581px;top:0;width:284px;height:900px;overflow:hidden"><div class="t" style="top:407.14px;font:12px 'Liberation Sans',sans-serif;color:#000;left:2.00px;transform-origin:0 0;transform:scaleX(0.9477);">MIRAMARVET DISTRIBUTION SRL</div></div>
<div class="a" style="left:866px;top:0;width:74px;height:900px;overflow:hidden"><div class="t" style="top:407.14px;font:12px 'Liberation Sans',sans-serif;color:#000;left:34.30px;transform-origin:100% 0;transform:scaleX(1.0352);">38,220</div></div>
<div class="a" style="left:941px;top:0;width:74px;height:900px;overflow:hidden"><div class="t" style="top:407.14px;font:12px 'Liberation Sans',sans-serif;color:#000;left:34.30px;transform-origin:100% 0;transform:scaleX(1.0352);">38,220</div></div>
<div class="a" style="left:1016px;top:0;width:12px;height:900px;overflow:hidden"><div class="t" style="top:407.14px;font:12px 'Liberation Sans',sans-serif;color:#000;left:2.00px;transform-origin:0 0;transform:scaleX(1.0420);">83</div></div>
<div class="a" style="left:342px;top:0;width:109px;height:900px;overflow:hidden"><div class="t" style="top:429.14px;font:12px 'Liberation Sans',sans-serif;color:#000;left:2.00px;transform-origin:0 0;transform:scaleX(1.0338);">Factura emisa</div></div>
<div class="a" style="left:452px;top:0;width:74px;height:900px;overflow:hidden"><div class="t" style="top:429.14px;font:12px 'Liberation Sans',sans-serif;color:#000;left:2.00px;transform-origin:0 0;transform:scaleX(1.0322);">25-11-2019</div></div>
<div class="a" style="left:527px;top:0;width:53px;height:900px;overflow:hidden"><div class="t" style="top:429.14px;font:12px 'Liberation Sans',sans-serif;color:#000;left:16.62px;transform-origin:100% 0;transform:scaleX(1.0420);">10834</div></div>
<div class="a" style="left:581px;top:0;width:284px;height:900px;overflow:hidden"><div class="t" style="top:429.14px;font:12px 'Liberation Sans',sans-serif;color:#000;left:2.00px;transform-origin:0 0;transform:scaleX(0.9489);">MANULOR CONSTRUCT S.R.L.</div></div>
<div class="a" style="left:866px;top:0;width:74px;height:900px;overflow:hidden"><div class="t" style="top:429.14px;font:12px 'Liberation Sans',sans-serif;color:#000;left:34.30px;transform-origin:100% 0;transform:scaleX(1.0352);">34,851</div></div>
<div class="a" style="left:941px;top:0;width:74px;height:900px;overflow:hidden"><div class="t" style="top:429.14px;font:12px 'Liberation Sans',sans-serif;color:#000;left:34.30px;transform-origin:100% 0;transform:scaleX(1.0352);">34,851</div></div>
<div class="a" style="left:1016px;top:0;width:12px;height:900px;overflow:hidden"><div class="t" style="top:429.14px;font:12px 'Liberation Sans',sans-serif;color:#000;left:2.00px;transform-origin:0 0;transform:scaleX(1.0420);">82</div></div>
<div class="a" style="left:342px;top:0;width:109px;height:900px;overflow:hidden"><div class="t" style="top:451.14px;font:12px 'Liberation Sans',sans-serif;color:#000;left:2.00px;transform-origin:0 0;transform:scaleX(1.0338);">Factura emisa</div></div>
<div class="a" style="left:452px;top:0;width:74px;height:900px;overflow:hidden"><div class="t" style="top:451.14px;font:12px 'Liberation Sans',sans-serif;color:#000;left:2.00px;transform-origin:0 0;transform:scaleX(1.0322);">10-10-2019</div></div>
<div class="a" style="left:527px;top:0;width:53px;height:900px;overflow:hidden"><div class="t" style="top:451.14px;font:12px 'Liberation Sans',sans-serif;color:#000;left:16.62px;transform-origin:100% 0;transform:scaleX(1.0420);">20002</div></div>
<div class="a" style="left:581px;top:0;width:284px;height:900px;overflow:hidden"><div class="t" style="top:451.14px;font:12px 'Liberation Sans',sans-serif;color:#000;left:2.00px;transform-origin:0 0;transform:scaleX(0.9899);">METRO Cash &amp; Carry Romania SRL</div></div>
<div class="a" style="left:866px;top:0;width:74px;height:900px;overflow:hidden"><div class="t" style="top:451.14px;font:12px 'Liberation Sans',sans-serif;color:#000;left:34.30px;transform-origin:100% 0;transform:scaleX(1.0352);">27,030</div></div>
<div class="a" style="left:941px;top:0;width:74px;height:900px;overflow:hidden"><div class="t" style="top:451.14px;font:12px 'Liberation Sans',sans-serif;color:#000;left:34.30px;transform-origin:100% 0;transform:scaleX(1.0352);">27,030</div></div>
<div class="a" style="left:1016px;top:0;width:12px;height:900px;overflow:hidden"><div class="t" style="top:451.14px;font:12px 'Liberation Sans',sans-serif;color:#000;left:2.00px;transform-origin:0 0;transform:scaleX(1.0420);">53</div></div>
<div class="a" style="left:1122px;top:292px;width:20px;height:198px;background:#f0f0f0;"></div>
<div class="a" style="left:1122px;top:314px;width:20px;height:67px;background:#cdcdcd;"></div>
<svg style="left:1127.0px;top:300px" width="11" height="7"><path d="M1 5.5L5.5 1L10 5.5" fill="none" stroke="#606060" stroke-width="1.5"/></svg>
<svg style="left:1127.0px;top:477px" width="11" height="7"><path d="M1 1L5.5 5.5L10 1" fill="none" stroke="#606060" stroke-width="1.5"/></svg>
<div class="t" style="top:494.85px;font:bold 14px 'Liberation Sans',sans-serif;color:#000;left:331px;transform-origin:0 0;transform:scaleX(1.1559);">Total neincasat :</div>
<div class="a" style="left:488px;top:491px;width:158px;height:25px;background:#fff;box-sizing:border-box;border:1px solid #0078d7;"></div>
<div class="a" style="left:563px;top:494px;width:80px;height:17px;background:#0078d7;"></div>
<div class="t" style="top:493.80px;font:bold 15px 'Liberation Sans',sans-serif;color:#fff;left:574.77px;transform-origin:100% 0;transform:scaleX(1.1600);">1,692,227</div>
<div class="t" style="top:311.97px;font:bold 20px 'Liberation Sans',sans-serif;color:#000;left:1215.7px;transform-origin:0 0;transform:scaleX(1.1864);">Vanzari ziua selectata</div>
<div class="a" style="left:1185px;top:341px;width:281px;height:33px;background:#fff;box-sizing:border-box;border:1px solid #a0a0a0;"></div>
<div class="t" style="top:345.38px;font:bold 22px 'Liberation Sans',sans-serif;color:#0000ff;left:1394.90px;transform-origin:100% 0;transform:scaleX(1.1219);">91,257</div>
<div class="t" style="top:350.38px;font:bold 22px 'Liberation Sans',sans-serif;color:#000;left:1478.2px;transform-origin:0 0;transform:scaleX(0.9654);">RON</div>
<div class="t" style="top:401.97px;font:bold 20px 'Liberation Sans',sans-serif;color:#000;left:1213.4px;transform-origin:0 0;transform:scaleX(1.1795);">Vanzari luna selectata</div>
<div class="a" style="left:1185px;top:431px;width:281px;height:33px;background:#fff;box-sizing:border-box;border:1px solid #a0a0a0;"></div>
<div class="t" style="top:434.78px;font:bold 22px 'Liberation Sans',sans-serif;color:#0000ff;left:1364.33px;transform-origin:100% 0;transform:scaleX(1.1239);">2,802,391</div>
<div class="t" style="top:434.88px;font:bold 22px 'Liberation Sans',sans-serif;color:#000;left:1478.2px;transform-origin:0 0;transform:scaleX(0.9654);">RON</div>
<div class="a" style="left:1186px;top:476px;width:29px;height:28px;background:#e1e1e1;box-sizing:border-box;border:1px solid #c8c8c8;"></div>
<div class="t" style="top:483.00px;font:13px 'Liberation Sans',sans-serif;color:#000;left:1185.31px;transform-origin:100% 0;transform:translateX(50%)">&lt;&lt;</div>
<div class="a" style="left:1216px;top:476px;width:29px;height:28px;background:#e1e1e1;box-sizing:border-box;border:1px solid #c8c8c8;"></div>
<svg style="left:1227.5px;top:486px" width="5" height="8"><path d="M4 0v8L0 4z" fill="#000"/></svg>
<div class="a" style="left:1247px;top:475px;width:161px;height:33px;background:#fff;box-sizing:border-box;border:1px solid #8f8f8f;"></div>
<div class="t" style="top:482.07px;font:20px 'Liberation Sans',sans-serif;color:#000;left:1250px;transform-origin:0 0;transform:scaleX(1.1729);">09-10-2019</div>
<svg style="left:1391px;top:488px" width="11" height="7"><path d="M0.5 0.5L5 5.5L9.5 0.5" fill="none" stroke="#666" stroke-width="1"/></svg>
<div class="a" style="left:1408px;top:476px;width:29px;height:28px;background:#e1e1e1;box-sizing:border-box;border:1px solid #c8c8c8;"></div>
<svg style="left:1421.5px;top:485px" width="5" height="8"><path d="M0 0v8L4 4z" fill="#000"/></svg>
<div class="a" style="left:1438px;top:476px;width:29px;height:28px;background:#e1e1e1;box-sizing:border-box;border:1px solid #c8c8c8;"></div>
<div class="t" style="top:483.00px;font:13px 'Liberation Sans',sans-serif;color:#000;left:1437.31px;transform-origin:100% 0;transform:translateX(50%)">&gt;&gt;</div>
<div class="t" style="top:539.05px;font:bold 14px 'Liberation Sans',sans-serif;color:#000;left:331px;transform-origin:0 0;transform:scaleX(1.1543);">Top vanzari clienti</div>
<svg style="left:699.5px;top:535.5px" width="17" height="16"><path d="M7.5 0.8h5l3 2.8v3.6l-2.6 2.6v5.2H6.5V7z" fill="#c2c2c6"/><path d="M12.6 0.9c1.8 0.6 2.9 2 2.9 3.6c0 1.6-1 2.9-2.6 3.6" fill="none" stroke="#6c6c70" stroke-width="1.3"/><path d="M9.5 2.5l2 2.2 1.8-1.4" fill="none" stroke="#f4f4f4" stroke-width="1.2"/><path d="M11 7.5l-1 2" stroke="#7a7a70" stroke-width="1.2"/><path d="M8.3 9.2l4.6 4.8" stroke="#ffffff" stroke-width="1.3"/><path d="M0.8 2.2l7 7" stroke="#1c3cb4" stroke-width="4"/><path d="M1.8 1.2l6.8 6.8" stroke="#86b2f6" stroke-width="1.1"/><path d="M0 8.6l2.4-1.8 4.6 3.4-3.2 4.8H0z" fill="#c39424"/><path d="M1.2 12.8l2.6-2.8" stroke="#f6d68a" stroke-width="1.1"/><path d="M0 5.5v3" stroke="#8a7ad8" stroke-width="1.2"/></svg>
<div class="a" style="left:325px;top:560px;width:400px;height:225px;overflow:hidden;box-sizing:border-box;border:1px solid #a0a0a0;background:#fff"></div>
<div class="a" style="left:341px;top:561px;width:1px;height:220px;background:#d4d4d4;"></div>
<div class="a" style="left:591px;top:561px;width:1px;height:220px;background:#eeeeee;"></div>
<div class="a" style="left:666px;top:561px;width:1px;height:220px;background:#eeeeee;"></div>
<div class="a" style="left:328px;top:583px;width:13px;height:1px;background:#d9d9d9;"></div>
<div class="a" style="left:328px;top:605px;width:13px;height:1px;background:#d9d9d9;"></div>
<div class="a" style="left:341px;top:605px;width:326px;height:1px;background:#eeeeee;"></div>
<div class="a" style="left:328px;top:627px;width:13px;height:1px;background:#d9d9d9;"></div>
<div class="a" style="left:341px;top:627px;width:326px;height:1px;background:#eeeeee;"></div>
<div class="a" style="left:328px;top:649px;width:13px;height:1px;background:#d9d9d9;"></div>
<div class="a" style="left:341px;top:649px;width:326px;height:1px;background:#eeeeee;"></div>
<div class="a" style="left:328px;top:671px;width:13px;height:1px;background:#d9d9d9;"></div>
<div class="a" style="left:341px;top:671px;width:326px;height:1px;background:#eeeeee;"></div>
<div class="a" style="left:328px;top:693px;width:13px;height:1px;background:#d9d9d9;"></div>
<div class="a" style="left:341px;top:693px;width:326px;height:1px;background:#eeeeee;"></div>
<div class="a" style="left:328px;top:715px;width:13px;height:1px;background:#d9d9d9;"></div>
<div class="a" style="left:341px;top:715px;width:326px;height:1px;background:#eeeeee;"></div>
<div class="a" style="left:328px;top:737px;width:13px;height:1px;background:#d9d9d9;"></div>
<div class="a" style="left:341px;top:737px;width:326px;height:1px;background:#eeeeee;"></div>
<div class="a" style="left:328px;top:759px;width:13px;height:1px;background:#d9d9d9;"></div>
<div class="a" style="left:341px;top:759px;width:326px;height:1px;background:#eeeeee;"></div>
<div class="a" style="left:328px;top:781px;width:13px;height:1px;background:#d9d9d9;"></div>
<div class="a" style="left:341px;top:781px;width:326px;height:1px;background:#eeeeee;"></div>
<div class="a" style="left:342px;top:0;width:249px;height:900px;overflow:hidden"><div class="t" style="top:566.14px;font:12px 'Liberation Sans',sans-serif;color:#000;left:2.00px;transform-origin:0 0;transform:scaleX(1.0296);">Partener</div></div>
<div class="a" style="left:592px;top:0;width:74px;height:900px;overflow:hidden"><div class="t" style="top:566.14px;font:12px 'Liberation Sans',sans-serif;color:#000;left:2.00px;transform-origin:0 0;transform:scaleX(0.9849);">Val. cu TVA</div></div>
<svg style="left:333px;top:587.5px" width="7" height="12"><path d="M0 0L6 5.5L0 11z" fill="#000"/></svg>
<div class="a" style="left:342px;top:0;width:249px;height:900px;overflow:hidden"><div class="t" style="top:588.14px;font:12px 'Liberation Sans',sans-serif;color:#000;left:2.00px;transform-origin:0 0;transform:scaleX(0.9487);">SELGROS CASH&amp;CARRY SRL</div></div>
<div class="a" style="left:592px;top:0;width:74px;height:900px;overflow:hidden"><div class="t" style="top:588.14px;font:12px 'Liberation Sans',sans-serif;color:#000;left:27.61px;transform-origin:100% 0;transform:scaleX(1.0362);">426,595</div></div>
<div class="a" style="left:342px;top:0;width:249px;height:900px;overflow:hidden"><div class="t" style="top:610.14px;font:12px 'Liberation Sans',sans-serif;color:#000;left:2.00px;transform-origin:0 0;transform:scaleX(0.9479);">NORDIC PETFOOD DISTRIBUTION SRL</div></div>
<div class="a" style="left:592px;top:0;width:74px;height:900px;overflow:hidden"><div class="t" style="top:610.14px;font:12px 'Liberation Sans',sans-serif;color:#000;left:27.61px;transform-origin:100% 0;transform:scaleX(1.0362);">318,195</div></div>
<div class="a" style="left:342px;top:0;width:249px;height:900px;overflow:hidden"><div class="t" style="top:632.14px;font:12px 'Liberation Sans',sans-serif;color:#000;left:2.00px;transform-origin:0 0;transform:scaleX(0.9489);">MANULOR CONSTRUCT S.R.L.</div></div>
<div class="a" style="left:592px;top:0;width:74px;height:900px;overflow:hidden"><div class="t" style="top:632.14px;font:12px 'Liberation Sans',sans-serif;color:#000;left:28.50px;transform-origin:100% 0;transform:scaleX(1.0362);">311,736</div></div>
<div class="a" style="left:342px;top:0;width:249px;height:900px;overflow:hidden"><div class="t" style="top:654.14px;font:12px 'Liberation Sans',sans-serif;color:#000;left:2.00px;transform-origin:0 0;transform:scaleX(0.9479);">GRANDY SRL</div></div>
<div class="a" style="left:592px;top:0;width:74px;height:900px;overflow:hidden"><div class="t" style="top:654.14px;font:12px 'Liberation Sans',sans-serif;color:#000;left:27.61px;transform-origin:100% 0;transform:scaleX(1.0362);">301,273</div></div>
<div class="a" style="left:342px;top:0;width:249px;height:900px;overflow:hidden"><div class="t" style="top:676.14px;font:12px 'Liberation Sans',sans-serif;color:#000;left:2.00px;transform-origin:0 0;transform:scaleX(0.9484);">SLIK IMPEX SRL</div></div>
<div class="a" style="left:592px;top:0;width:74px;height:900px;overflow:hidden"><div class="t" style="top:676.14px;font:12px 'Liberation Sans',sans-serif;color:#000;left:27.61px;transform-origin:100% 0;transform:scaleX(1.0362);">275,183</div></div>
<div class="a" style="left:342px;top:0;width:249px;height:900px;overflow:hidden"><div class="t" style="top:698.14px;font:12px 'Liberation Sans',sans-serif;color:#000;left:2.00px;transform-origin:0 0;transform:scaleX(0.9482);">INVEST ACTIV SRL</div></div>
<div class="a" style="left:592px;top:0;width:74px;height:900px;overflow:hidden"><div class="t" style="top:698.14px;font:12px 'Liberation Sans',sans-serif;color:#000;left:27.61px;transform-origin:100% 0;transform:scaleX(1.0362);">225,991</div></div>
<div class="a" style="left:342px;top:0;width:249px;height:900px;overflow:hidden"><div class="t" style="top:720.14px;font:12px 'Liberation Sans',sans-serif;color:#000;left:2.00px;transform-origin:0 0;transform:scaleX(0.9498);">HELMI VET S.R.L</div></div>
<div class="a" style="left:592px;top:0;width:74px;height:900px;overflow:hidden"><div class="t" style="top:720.14px;font:12px 'Liberation Sans',sans-serif;color:#000;left:28.50px;transform-origin:100% 0;transform:scaleX(1.0362);">211,697</div></div>
<div class="a" style="left:342px;top:0;width:249px;height:900px;overflow:hidden"><div class="t" style="top:742.14px;font:12px 'Liberation Sans',sans-serif;color:#000;left:2.00px;transform-origin:0 0;transform:scaleX(0.9478);">ROBLEO COM</div></div>
<div class="a" style="left:592px;top:0;width:74px;height:900px;overflow:hidden"><div class="t" style="top:742.14px;font:12px 'Liberation Sans',sans-serif;color:#000;left:27.61px;transform-origin:100% 0;transform:scaleX(1.0362);">177,762</div></div>
<div class="a" style="left:342px;top:0;width:249px;height:900px;overflow:hidden"><div class="t" style="top:764.14px;font:12px 'Liberation Sans',sans-serif;color:#000;left:2.00px;transform-origin:0 0;transform:scaleX(0.9480);">NIEGO SRL</div></div>
<div class="a" style="left:592px;top:0;width:74px;height:900px;overflow:hidden"><div class="t" style="top:764.14px;font:12px 'Liberation Sans',sans-serif;color:#000;left:27.61px;transform-origin:100% 0;transform:scaleX(1.0362);">150,796</div></div>
<div class="a" style="left:703px;top:561px;width:20px;height:223px;background:#f0f0f0;"></div>
<div class="a" style="left:703px;top:583px;width:20px;height:84px;background:#cdcdcd;"></div>
<svg style="left:708.0px;top:569px" width="11" height="7"><path d="M1 5.5L5.5 1L10 5.5" fill="none" stroke="#606060" stroke-width="1.5"/></svg>
<div class="a" style="left:703px;top:763px;width:20px;height:21px;background:#dadada;"></div>
<svg style="left:708.0px;top:771px" width="11" height="7"><path d="M1 1L5.5 5.5L10 1" fill="none" stroke="#202020" stroke-width="1.9"/></svg>
<div class="t" style="top:539.05px;font:bold 14px 'Liberation Sans',sans-serif;color:#000;left:751.2px;transform-origin:0 0;transform:scaleX(1.1665);">Top vanzari produse</div>
<svg style="left:1119.5px;top:535.5px" width="17" height="16"><path d="M7.5 0.8h5l3 2.8v3.6l-2.6 2.6v5.2H6.5V7z" fill="#c2c2c6"/><path d="M12.6 0.9c1.8 0.6 2.9 2 2.9 3.6c0 1.6-1 2.9-2.6 3.6" fill="none" stroke="#6c6c70" stroke-width="1.3"/><path d="M9.5 2.5l2 2.2 1.8-1.4" fill="none" stroke="#f4f4f4" stroke-width="1.2"/><path d="M11 7.5l-1 2" stroke="#7a7a70" stroke-width="1.2"/><path d="M8.3 9.2l4.6 4.8" stroke="#ffffff" stroke-width="1.3"/><path d="M0.8 2.2l7 7" stroke="#1c3cb4" stroke-width="4"/><path d="M1.8 1.2l6.8 6.8" stroke="#86b2f6" stroke-width="1.1"/><path d="M0 8.6l2.4-1.8 4.6 3.4-3.2 4.8H0z" fill="#c39424"/><path d="M1.2 12.8l2.6-2.8" stroke="#f6d68a" stroke-width="1.1"/><path d="M0 5.5v3" stroke="#8a7ad8" stroke-width="1.2"/></svg>
<div class="a" style="left:745px;top:560px;width:400px;height:225px;overflow:hidden;box-sizing:border-box;border:1px solid #a0a0a0;background:#fff"></div>
<div class="a" style="left:761px;top:561px;width:1px;height:220px;background:#d4d4d4;"></div>
<div class="a" style="left:1011px;top:561px;width:1px;height:220px;background:#eeeeee;"></div>
<div class="a" style="left:1086px;top:561px;width:1px;height:220px;background:#eeeeee;"></div>
<div class="a" style="left:748px;top:583px;width:13px;height:1px;background:#d9d9d9;"></div>
<div class="a" style="left:748px;top:605px;width:13px;height:1px;background:#d9d9d9;"></div>
<div class="a" style="left:761px;top:605px;width:326px;height:1px;background:#eeeeee;"></div>
<div class="a" style="left:748px;top:627px;width:13px;height:1px;background:#d9d9d9;"></div>
<div class="a" style="left:761px;top:627px;width:326px;height:1px;background:#eeeeee;"></div>
<div class="a" style="left:748px;top:649px;width:13px;height:1px;background:#d9d9d9;"></div>
<div class="a" style="left:761px;top:649px;width:326px;height:1px;background:#eeeeee;"></div>
<div class="a" style="left:748px;top:671px;width:13px;height:1px;background:#d9d9d9;"></div>
<div class="a" style="left:761px;top:671px;width:326px;height:1px;background:#eeeeee;"></div>
<div class="a" style="left:748px;top:693px;width:13px;height:1px;background:#d9d9d9;"></div>
<div class="a" style="left:761px;top:693px;width:326px;height:1px;background:#eeeeee;"></div>
<div class="a" style="left:748px;top:715px;width:13px;height:1px;background:#d9d9d9;"></div>
<div class="a" style="left:761px;top:715px;width:326px;height:1px;background:#eeeeee;"></div>
<div class="a" style="left:748px;top:737px;width:13px;height:1px;background:#d9d9d9;"></div>
<div class="a" style="left:761px;top:737px;width:326px;height:1px;background:#eeeeee;"></div>
<div class="a" style="left:748px;top:759px;width:13px;height:1px;background:#d9d9d9;"></div>
<div class="a" style="left:761px;top:759px;width:326px;height:1px;background:#eeeeee;"></div>
<div class="a" style="left:748px;top:781px;width:13px;height:1px;background:#d9d9d9;"></div>
<div class="a" style="left:761px;top:781px;width:326px;height:1px;background:#eeeeee;"></div>
<div class="a" style="left:762px;top:0;width:249px;height:900px;overflow:hidden"><div class="t" style="top:566.14px;font:12px 'Liberation Sans',sans-serif;color:#000;left:2.00px;transform-origin:0 0;transform:scaleX(1.0230);">Articol</div></div>
<div class="a" style="left:1012px;top:0;width:74px;height:900px;overflow:hidden"><div class="t" style="top:566.14px;font:12px 'Liberation Sans',sans-serif;color:#000;left:2.00px;transform-origin:0 0;transform:scaleX(0.9849);">Val. cu TVA</div></div>
<svg style="left:753px;top:587.5px" width="7" height="12"><path d="M0 0L6 5.5L0 11z" fill="#000"/></svg>
<div class="a" style="left:762px;top:0;width:249px;height:900px;overflow:hidden"><div class="t" style="top:588.14px;font:12px 'Liberation Sans',sans-serif;color:#000;left:2.00px;transform-origin:0 0;transform:scaleX(0.9899);">COOKIE compl.men.ad.EVERY DAY 10 kg</div></div>
<div class="a" style="left:1012px;top:0;width:74px;height:900px;overflow:hidden"><div class="t" style="top:588.14px;font:12px 'Liberation Sans',sans-serif;color:#000;left:17.61px;transform-origin:100% 0;transform:scaleX(1.0326);">1,615,485</div></div>
<div class="a" style="left:762px;top:0;width:249px;height:900px;overflow:hidden"><div class="t" style="top:610.14px;font:12px 'Liberation Sans',sans-serif;color:#000;left:2.00px;transform-origin:0 0;transform:scaleX(0.9485);">EVERYDAY CAT CU GUST DELICIOS DE PESTE</div></div>
<div class="a" style="left:1012px;top:0;width:74px;height:900px;overflow:hidden"><div class="t" style="top:610.14px;font:12px 'Liberation Sans',sans-serif;color:#000;left:27.61px;transform-origin:100% 0;transform:scaleX(1.0362);">690,687</div></div>
<div class="a" style="left:762px;top:0;width:249px;height:900px;overflow:hidden"><div class="t" style="top:632.14px;font:12px 'Liberation Sans',sans-serif;color:#000;left:2.00px;transform-origin:0 0;transform:scaleX(0.9900);">COOKIE special.ad.JUNIOR 10 kg</div></div>
<div class="a" style="left:1012px;top:0;width:74px;height:900px;overflow:hidden"><div class="t" style="top:632.14px;font:12px 'Liberation Sans',sans-serif;color:#000;left:27.61px;transform-origin:100% 0;transform:scaleX(1.0362);">489,677</div></div>
<div class="a" style="left:762px;top:0;width:249px;height:900px;overflow:hidden"><div class="t" style="top:654.14px;font:12px 'Liberation Sans',sans-serif;color:#000;left:2.00px;transform-origin:0 0;">COOKIE compl.plus.ad.cu VITA 10 kg</div></div>
<div class="a" style="left:1012px;top:0;width:74px;height:900px;overflow:hidden"><div class="t" style="top:654.14px;font:12px 'Liberation Sans',sans-serif;color:#000;left:27.61px;transform-origin:100% 0;transform:scaleX(1.0362);">406,518</div></div>
<div class="a" style="left:762px;top:0;width:249px;height:900px;overflow:hidden"><div class="t" style="top:676.14px;font:12px 'Liberation Sans',sans-serif;color:#000;left:2.00px;transform-origin:0 0;">COOKIE compl.plus.ad.cu PUI 10 KG</div></div>
<div class="a" style="left:1012px;top:0;width:74px;height:900px;overflow:hidden"><div class="t" style="top:676.14px;font:12px 'Liberation Sans',sans-serif;color:#000;left:27.61px;transform-origin:100% 0;transform:scaleX(1.0362);">246,707</div></div>
<div class="a" style="left:762px;top:0;width:249px;height:900px;overflow:hidden"><div class="t" style="top:698.14px;font:12px 'Liberation Sans',sans-serif;color:#000;left:2.00px;transform-origin:0 0;transform:scaleX(1.0221);">Oslo Hr. usc. compl. pt caini 10 kg</div></div>
<div class="a" style="left:1012px;top:0;width:74px;height:900px;overflow:hidden"><div class="t" style="top:698.14px;font:12px 'Liberation Sans',sans-serif;color:#000;left:27.61px;transform-origin:100% 0;transform:scaleX(1.0362);">198,137</div></div>
<div class="a" style="left:762px;top:0;width:249px;height:900px;overflow:hidden"><div class="t" style="top:720.14px;font:12px 'Liberation Sans',sans-serif;color:#000;left:2.00px;transform-origin:0 0;transform:scaleX(0.9542);">KIRBY CAT PUI  CURCAN SI LEGUME 12 KG</div></div>
<div class="a" style="left:1012px;top:0;width:74px;height:900px;overflow:hidden"><div class="t" style="top:720.14px;font:12px 'Liberation Sans',sans-serif;color:#000;left:27.61px;transform-origin:100% 0;transform:scaleX(1.0362);">149,472</div></div>
<div class="a" style="left:762px;top:0;width:249px;height:900px;overflow:hidden"><div class="t" style="top:742.14px;font:12px 'Liberation Sans',sans-serif;color:#000;left:2.00px;transform-origin:0 0;transform:scaleX(0.9628);">SKIPPER PASARE SI VITA 10 kg</div></div>
<div class="a" style="left:1012px;top:0;width:74px;height:900px;overflow:hidden"><div class="t" style="top:742.14px;font:12px 'Liberation Sans',sans-serif;color:#000;left:27.61px;transform-origin:100% 0;transform:scaleX(1.0362);">121,533</div></div>
<div class="a" style="left:762px;top:0;width:249px;height:900px;overflow:hidden"><div class="t" style="top:764.14px;font:12px 'Liberation Sans',sans-serif;color:#000;left:2.00px;transform-origin:0 0;transform:scaleX(0.9531);">HRANA USCATA PENTRU CAINI ADULTI 10KG</div></div>
<div class="a" style="left:1012px;top:0;width:74px;height:900px;overflow:hidden"><div class="t" style="top:764.14px;font:12px 'Liberation Sans',sans-serif;color:#000;left:34.30px;transform-origin:100% 0;transform:scaleX(1.0352);">94,876</div></div>
<div class="a" style="left:1123px;top:561px;width:20px;height:223px;background:#f0f0f0;"></div>
<div class="a" style="left:1123px;top:583px;width:20px;height:84px;background:#cdcdcd;"></div>
<svg style="left:1128.0px;top:569px" width="11" height="7"><path d="M1 5.5L5.5 1L10 5.5" fill="none" stroke="#606060" stroke-width="1.5"/></svg>
<svg style="left:1128.0px;top:771px" width="11" height="7"><path d="M1 1L5.5 5.5L10 1" fill="none" stroke="#606060" stroke-width="1.5"/></svg>
<div class="t" style="top:539.05px;font:bold 14px 'Liberation Sans',sans-serif;color:#000;left:1160.3px;transform-origin:0 0;transform:scaleX(1.1752);">Top vanzari pe agenti</div>
<svg style="left:1528.5px;top:536px" width="17" height="16"><path d="M7.5 0.8h5l3 2.8v3.6l-2.6 2.6v5.2H6.5V7z" fill="#c2c2c6"/><path d="M12.6 0.9c1.8 0.6 2.9 2 2.9 3.6c0 1.6-1 2.9-2.6 3.6" fill="none" stroke="#6c6c70" stroke-width="1.3"/><path d="M9.5 2.5l2 2.2 1.8-1.4" fill="none" stroke="#f4f4f4" stroke-width="1.2"/><path d="M11 7.5l-1 2" stroke="#7a7a70" stroke-width="1.2"/><path d="M8.3 9.2l4.6 4.8" stroke="#ffffff" stroke-width="1.3"/><path d="M0.8 2.2l7 7" stroke="#1c3cb4" stroke-width="4"/><path d="M1.8 1.2l6.8 6.8" stroke="#86b2f6" stroke-width="1.1"/><path d="M0 8.6l2.4-1.8 4.6 3.4-3.2 4.8H0z" fill="#c39424"/><path d="M1.2 12.8l2.6-2.8" stroke="#f6d68a" stroke-width="1.1"/><path d="M0 5.5v3" stroke="#8a7ad8" stroke-width="1.2"/></svg>
<div class="a" style="left:1154px;top:560px;width:446px;height:340px;overflow:hidden;box-sizing:border-box;border:1px solid #a0a0a0;background:#fff"></div>
<div class="a" style="left:1170px;top:561px;width:1px;height:298px;background:#d4d4d4;"></div>
<div class="a" style="left:1420px;top:561px;width:1px;height:298px;background:#eeeeee;"></div>
<div class="a" style="left:1495px;top:561px;width:1px;height:298px;background:#eeeeee;"></div>
<div class="a" style="left:1157px;top:583px;width:13px;height:1px;background:#d9d9d9;"></div>
<div class="a" style="left:1157px;top:605px;width:13px;height:1px;background:#d9d9d9;"></div>
<div class="a" style="left:1170px;top:605px;width:326px;height:1px;background:#eeeeee;"></div>
<div class="a" style="left:1157px;top:627px;width:13px;height:1px;background:#d9d9d9;"></div>
<div class="a" style="left:1170px;top:627px;width:326px;height:1px;background:#eeeeee;"></div>
<div class="a" style="left:1157px;top:649px;width:13px;height:1px;background:#d9d9d9;"></div>
<div class="a" style="left:1170px;top:649px;width:326px;height:1px;background:#eeeeee;"></div>
<div class="a" style="left:1157px;top:671px;width:13px;height:1px;background:#d9d9d9;"></div>
<div class="a" style="left:1170px;top:671px;width:326px;height:1px;background:#eeeeee;"></div>
<div class="a" style="left:1157px;top:693px;width:13px;height:1px;background:#d9d9d9;"></div>
<div class="a" style="left:1170px;top:693px;width:326px;height:1px;background:#eeeeee;"></div>
<div class="a" style="left:1157px;top:715px;width:13px;height:1px;background:#d9d9d9;"></div>
<div class="a" style="left:1170px;top:715px;width:326px;height:1px;background:#eeeeee;"></div>
<div class="a" style="left:1157px;top:737px;width:13px;height:1px;background:#d9d9d9;"></div>
<div class="a" style="left:1170px;top:737px;width:326px;height:1px;background:#eeeeee;"></div>
<div class="a" style="left:1157px;top:759px;width:13px;height:1px;background:#d9d9d9;"></div>
<div class="a" style="left:1170px;top:759px;width:326px;height:1px;background:#eeeeee;"></div>
<div class="a" style="left:1157px;top:781px;width:13px;height:1px;background:#d9d9d9;"></div>
<div class="a" style="left:1170px;top:781px;width:326px;height:1px;background:#eeeeee;"></div>
<div class="a" style="left:1157px;top:803px;width:13px;height:1px;background:#d9d9d9;"></div>
<div class="a" style="left:1170px;top:803px;width:326px;height:1px;background:#eeeeee;"></div>
<div class="a" style="left:1157px;top:825px;width:13px;height:1px;background:#d9d9d9;"></div>
<div class="a" style="left:1170px;top:825px;width:326px;height:1px;background:#eeeeee;"></div>
<div class="a" style="left:1157px;top:847px;width:13px;height:1px;background:#d9d9d9;"></div>
<div class="a" style="left:1170px;top:847px;width:326px;height:1px;background:#eeeeee;"></div>
<div class="a" style="left:1171px;top:0;width:249px;height:900px;overflow:hidden"><div class="t" style="top:566.14px;font:12px 'Liberation Sans',sans-serif;color:#000;left:2.00px;transform-origin:0 0;transform:scaleX(1.0215);">Agent</div></div>
<div class="a" style="left:1421px;top:0;width:74px;height:900px;overflow:hidden"><div class="t" style="top:566.14px;font:12px 'Liberation Sans',sans-serif;color:#000;left:2.00px;transform-origin:0 0;transform:scaleX(0.9849);">Val. cu TVA</div></div>
<svg style="left:1162px;top:587.5px" width="7" height="12"><path d="M0 0L6 5.5L0 11z" fill="#000"/></svg>
<div class="a" style="left:1171px;top:0;width:249px;height:900px;overflow:hidden"><div class="t" style="top:588.14px;font:12px 'Liberation Sans',sans-serif;color:#000;left:2.00px;transform-origin:0 0;transform:scaleX(1.0226);">Viorica Drugea</div></div>
<div class="a" style="left:1421px;top:0;width:74px;height:900px;overflow:hidden"><div class="t" style="top:588.14px;font:12px 'Liberation Sans',sans-serif;color:#000;left:27.61px;transform-origin:100% 0;transform:scaleX(1.0362);">849,728</div></div>
<div class="a" style="left:1171px;top:0;width:249px;height:900px;overflow:hidden"><div class="t" style="top:610.14px;font:12px 'Liberation Sans',sans-serif;color:#000;left:2.00px;transform-origin:0 0;transform:scaleX(1.0210);">Filip Ionel</div></div>
<div class="a" style="left:1421px;top:0;width:74px;height:900px;overflow:hidden"><div class="t" style="top:610.14px;font:12px 'Liberation Sans',sans-serif;color:#000;left:27.61px;transform-origin:100% 0;transform:scaleX(1.0362);">673,803</div></div>
<div class="a" style="left:1171px;top:0;width:249px;height:900px;overflow:hidden"><div class="t" style="top:632.14px;font:12px 'Liberation Sans',sans-serif;color:#000;left:2.00px;transform-origin:0 0;transform:scaleX(1.0182);">Danut Ciulpa</div></div>
<div class="a" style="left:1421px;top:0;width:74px;height:900px;overflow:hidden"><div class="t" style="top:632.14px;font:12px 'Liberation Sans',sans-serif;color:#000;left:27.61px;transform-origin:100% 0;transform:scaleX(1.0362);">668,384</div></div>
<div class="a" style="left:1171px;top:0;width:249px;height:900px;overflow:hidden"><div class="t" style="top:654.14px;font:12px 'Liberation Sans',sans-serif;color:#000;left:2.00px;transform-origin:0 0;transform:scaleX(1.0195);">Gabriel Balan</div></div>
<div class="a" style="left:1421px;top:0;width:74px;height:900px;overflow:hidden"><div class="t" style="top:654.14px;font:12px 'Liberation Sans',sans-serif;color:#000;left:27.61px;transform-origin:100% 0;transform:scaleX(1.0362);">654,433</div></div>
<div class="a" style="left:1171px;top:0;width:249px;height:900px;overflow:hidden"><div class="t" style="top:676.14px;font:12px 'Liberation Sans',sans-serif;color:#000;left:2.00px;transform-origin:0 0;transform:scaleX(1.0268);">Ionel Gavriliuc</div></div>
<div class="a" style="left:1421px;top:0;width:74px;height:900px;overflow:hidden"><div class="t" style="top:676.14px;font:12px 'Liberation Sans',sans-serif;color:#000;left:27.61px;transform-origin:100% 0;transform:scaleX(1.0362);">626,265</div></div>
<div class="a" style="left:1171px;top:0;width:249px;height:900px;overflow:hidden"><div class="t" style="top:698.14px;font:12px 'Liberation Sans',sans-serif;color:#000;left:2.00px;transform-origin:0 0;transform:scaleX(1.0148);">Gabi Stoicu</div></div>
<div class="a" style="left:1421px;top:0;width:74px;height:900px;overflow:hidden"><div class="t" style="top:698.14px;font:12px 'Liberation Sans',sans-serif;color:#000;left:27.61px;transform-origin:100% 0;transform:scaleX(1.0362);">621,515</div></div>
<div class="a" style="left:1171px;top:0;width:249px;height:900px;overflow:hidden"><div class="t" style="top:720.14px;font:12px 'Liberation Sans',sans-serif;color:#000;left:2.00px;transform-origin:0 0;transform:scaleX(1.0192);">Mircea Necula</div></div>
<div class="a" style="left:1421px;top:0;width:74px;height:900px;overflow:hidden"><div class="t" style="top:720.14px;font:12px 'Liberation Sans',sans-serif;color:#000;left:27.61px;transform-origin:100% 0;transform:scaleX(1.0362);">459,866</div></div>
<div class="a" style="left:1171px;top:0;width:249px;height:900px;overflow:hidden"><div class="t" style="top:742.14px;font:12px 'Liberation Sans',sans-serif;color:#000;left:2.00px;transform-origin:0 0;transform:scaleX(1.0229);">Tunas Razvan</div></div>
<div class="a" style="left:1421px;top:0;width:74px;height:900px;overflow:hidden"><div class="t" style="top:742.14px;font:12px 'Liberation Sans',sans-serif;color:#000;left:27.61px;transform-origin:100% 0;transform:scaleX(1.0362);">403,351</div></div>
<div class="a" style="left:1171px;top:0;width:249px;height:900px;overflow:hidden"><div class="t" style="top:764.14px;font:12px 'Liberation Sans',sans-serif;color:#000;left:2.00px;transform-origin:0 0;transform:scaleX(1.0275);">- nedefinit -</div></div>
<div class="a" style="left:1421px;top:0;width:74px;height:900px;overflow:hidden"><div class="t" style="top:764.14px;font:12px 'Liberation Sans',sans-serif;color:#000;left:27.61px;transform-origin:100% 0;transform:scaleX(1.0362);">318,195</div></div>
<div class="a" style="left:1171px;top:0;width:249px;height:900px;overflow:hidden"><div class="t" style="top:786.14px;font:12px 'Liberation Sans',sans-serif;color:#000;left:2.00px;transform-origin:0 0;transform:scaleX(0.9481);">IOAN STEF</div></div>
<div class="a" style="left:1421px;top:0;width:74px;height:900px;overflow:hidden"><div class="t" style="top:786.14px;font:12px 'Liberation Sans',sans-serif;color:#000;left:27.61px;transform-origin:100% 0;transform:scaleX(1.0362);">222,242</div></div>
<div class="a" style="left:1171px;top:0;width:249px;height:900px;overflow:hidden"><div class="t" style="top:808.14px;font:12px 'Liberation Sans',sans-serif;color:#000;left:2.00px;transform-origin:0 0;transform:scaleX(1.0210);">Stanciu Marius</div></div>
<div class="a" style="left:1421px;top:0;width:74px;height:900px;overflow:hidden"><div class="t" style="top:808.14px;font:12px 'Liberation Sans',sans-serif;color:#000;left:29.39px;transform-origin:100% 0;transform:scaleX(1.0362);">115,011</div></div>
<div class="a" style="left:1171px;top:0;width:249px;height:900px;overflow:hidden"><div class="t" style="top:830.14px;font:12px 'Liberation Sans',sans-serif;color:#000;left:2.00px;transform-origin:0 0;transform:scaleX(1.0235);">Bivolaru Florin</div></div>
<div class="a" style="left:1421px;top:0;width:74px;height:900px;overflow:hidden"><div class="t" style="top:830.14px;font:12px 'Liberation Sans',sans-serif;color:#000;left:34.30px;transform-origin:100% 0;transform:scaleX(1.0352);">47,062</div></div>
<div class="a" style="left:1171px;top:0;width:249px;height:900px;overflow:hidden"><div class="t" style="top:852.14px;font:12px 'Liberation Sans',sans-serif;color:#000;left:2.00px;transform-origin:0 0;transform:scaleX(0.9470);">MAREA</div></div>
<div class="a" style="left:1421px;top:0;width:74px;height:900px;overflow:hidden"><div class="t" style="top:852.14px;font:12px 'Liberation Sans',sans-serif;color:#000;left:50.97px;transform-origin:100% 0;transform:scaleX(1.0420);">831</div></div>
<div class="a" style="left:1531px;top:561px;width:2px;height:298px;background:#f0f0f0;"></div>
<div class="a" style="left:1531px;top:583px;width:2px;height:231px;background:#cdcdcd;"></div>
<div class="t" style="top:814.45px;font:bold 14px 'Liberation Sans',sans-serif;color:#000;left:331px;transform-origin:0 0;transform:scaleX(1.1975);">Top vanzari clienti / agent</div>
<svg style="left:699.5px;top:811px" width="17" height="16"><path d="M7.5 0.8h5l3 2.8v3.6l-2.6 2.6v5.2H6.5V7z" fill="#c2c2c6"/><path d="M12.6 0.9c1.8 0.6 2.9 2 2.9 3.6c0 1.6-1 2.9-2.6 3.6" fill="none" stroke="#6c6c70" stroke-width="1.3"/><path d="M9.5 2.5l2 2.2 1.8-1.4" fill="none" stroke="#f4f4f4" stroke-width="1.2"/><path d="M11 7.5l-1 2" stroke="#7a7a70" stroke-width="1.2"/><path d="M8.3 9.2l4.6 4.8" stroke="#ffffff" stroke-width="1.3"/><path d="M0.8 2.2l7 7" stroke="#1c3cb4" stroke-width="4"/><path d="M1.8 1.2l6.8 6.8" stroke="#86b2f6" stroke-width="1.1"/><path d="M0 8.6l2.4-1.8 4.6 3.4-3.2 4.8H0z" fill="#c39424"/><path d="M1.2 12.8l2.6-2.8" stroke="#f6d68a" stroke-width="1.1"/><path d="M0 5.5v3" stroke="#8a7ad8" stroke-width="1.2"/></svg>
<div class="a" style="left:325px;top:836px;width:400px;height:64px;overflow:hidden;box-sizing:border-box;border:1px solid #a0a0a0;background:#fff"></div>
<div class="a" style="left:341px;top:837px;width:1px;height:22px;background:#d4d4d4;"></div>
<div class="a" style="left:557px;top:837px;width:1px;height:22px;background:#eeeeee;"></div>
<div class="a" style="left:570px;top:837px;width:1px;height:22px;background:#eeeeee;"></div>
<div class="a" style="left:342px;top:0;width:215px;height:900px;overflow:hidden"><div class="t" style="top:842.14px;font:12px 'Liberation Sans',sans-serif;color:#000;left:2.00px;transform-origin:0 0;transform:scaleX(1.0215);">Agent</div></div>
<div class="a" style="left:558px;top:0;width:12px;height:900px;overflow:hidden"><div class="t" style="top:842.14px;font:12px 'Liberation Sans',sans-serif;color:#000;left:2.00px;transform-origin:0 0;transform:scaleX(0.9670);">..</div></div>
<div class="a" style="left:703px;top:837px;width:20px;height:62px;background:#f0f0f0;"></div>
<svg style="left:708.0px;top:845px" width="11" height="7"><path d="M1 5.5L5.5 1L10 5.5" fill="none" stroke="#606060" stroke-width="1.5"/></svg>
<svg style="left:708.0px;top:886px" width="11" height="7"><path d="M1 1L5.5 5.5L10 1" fill="none" stroke="#606060" stroke-width="1.5"/></svg>
<div class="t" style="top:814.45px;font:bold 14px 'Liberation Sans',sans-serif;color:#000;left:750.4px;transform-origin:0 0;transform:scaleX(1.1956);">Top vanzari articole / agenti</div>
<svg style="left:1119.5px;top:811px" width="17" height="16"><path d="M7.5 0.8h5l3 2.8v3.6l-2.6 2.6v5.2H6.5V7z" fill="#c2c2c6"/><path d="M12.6 0.9c1.8 0.6 2.9 2 2.9 3.6c0 1.6-1 2.9-2.6 3.6" fill="none" stroke="#6c6c70" stroke-width="1.3"/><path d="M9.5 2.5l2 2.2 1.8-1.4" fill="none" stroke="#f4f4f4" stroke-width="1.2"/><path d="M11 7.5l-1 2" stroke="#7a7a70" stroke-width="1.2"/><path d="M8.3 9.2l4.6 4.8" stroke="#ffffff" stroke-width="1.3"/><path d="M0.8 2.2l7 7" stroke="#1c3cb4" stroke-width="4"/><path d="M1.8 1.2l6.8 6.8" stroke="#86b2f6" stroke-width="1.1"/><path d="M0 8.6l2.4-1.8 4.6 3.4-3.2 4.8H0z" fill="#c39424"/><path d="M1.2 12.8l2.6-2.8" stroke="#f6d68a" stroke-width="1.1"/><path d="M0 5.5v3" stroke="#8a7ad8" stroke-width="1.2"/></svg>
<div class="a" style="left:745px;top:836px;width:400px;height:64px;overflow:hidden;box-sizing:border-box;border:1px solid #a0a0a0;background:#fff"></div>
<div class="a" style="left:761px;top:837px;width:1px;height:22px;background:#d4d4d4;"></div>
<div class="a" style="left:976px;top:837px;width:1px;height:22px;background:#eeeeee;"></div>
<div class="a" style="left:989px;top:837px;width:1px;height:22px;background:#eeeeee;"></div>
<div class="a" style="left:762px;top:0;width:214px;height:900px;overflow:hidden"><div class="t" style="top:842.14px;font:12px 'Liberation Sans',sans-serif;color:#000;left:2.00px;transform-origin:0 0;transform:scaleX(1.0215);">Agent</div></div>
<div class="a" style="left:977px;top:0;width:12px;height:900px;overflow:hidden"><div class="t" style="top:842.14px;font:12px 'Liberation Sans',sans-serif;color:#000;left:2.00px;transform-origin:0 0;transform:scaleX(0.9670);">..</div></div>
<div class="a" style="left:1123px;top:837px;width:20px;height:62px;background:#f0f0f0;"></div>
<svg style="left:1128.0px;top:845px" width="11" height="7"><path d="M1 5.5L5.5 1L10 5.5" fill="none" stroke="#606060" stroke-width="1.5"/></svg>
<svg style="left:1128.0px;top:886px" width="11" height="7"><path d="M1 1L5.5 5.5L10 1" fill="none" stroke="#606060" stroke-width="1.5"/></svg>
</body></html>
